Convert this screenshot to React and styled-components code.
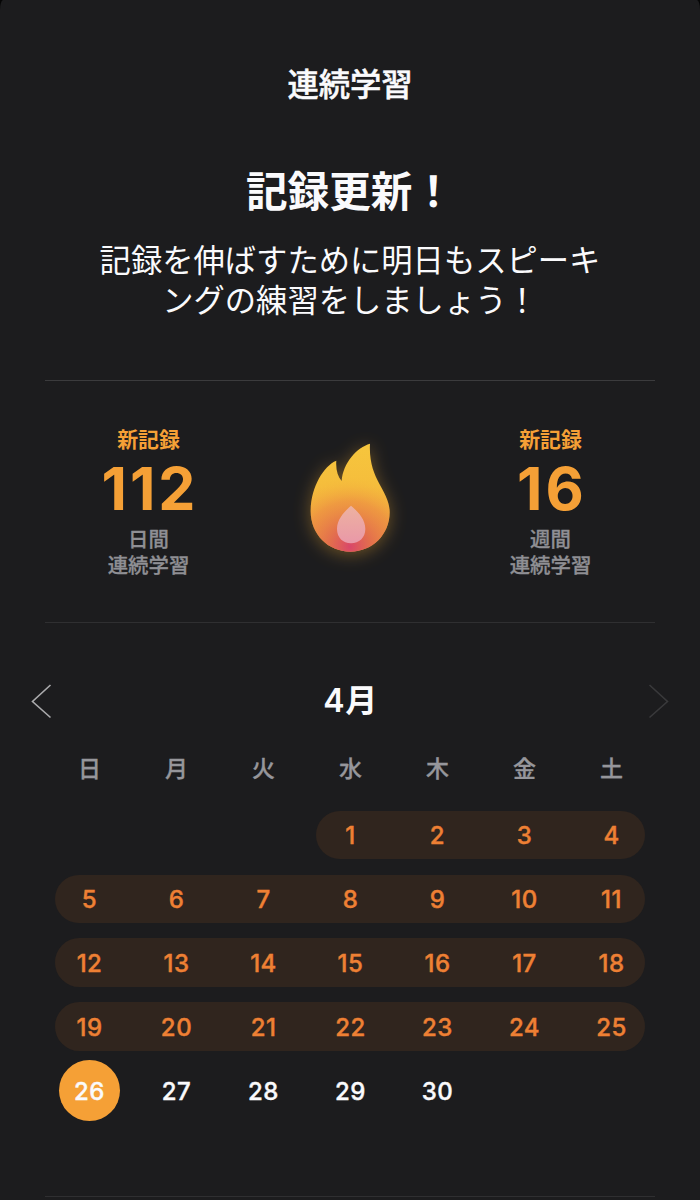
import React from "react";
import styled, { createGlobalStyle } from "styled-components";

const GlobalStyle = createGlobalStyle`
  * { box-sizing: border-box; }
  body {
    margin: 0;
    background: #050505;
    font-family: Inter, "Noto Sans CJK JP", sans-serif;
    color: #fafafc;
    overflow: hidden;
  }
`;

const Screen = styled.main`
  width: 700px;
  height: 1200px;
  overflow: hidden;
  background: #1c1c1e;
  border-radius: 3px 3px 0 0 / 10px 10px 0 0;
  display: flex;
  flex-direction: column;
`;

const ScreenTitle = styled.h1`
  margin: 63px 0 0;
  font: 500 31.3px/40px "Noto Sans CJK JP", sans-serif;
  -webkit-text-stroke: 0.5px currentColor;
  text-align: center;
`;

const Headline = styled.h2`
  margin: 56px 0 0;
  font: 700 41.6px/60px "Noto Sans CJK JP", sans-serif;
  text-align: center;
`;

const Message = styled.p`
  margin: 20px 0 0;
  height: 141px;
  font: 400 31.3px/40px "Noto Sans CJK JP", sans-serif;
  text-align: center;
  white-space: pre-line;
`;

const Divider = styled.hr`
  flex: none;
  margin: 0 45px;
  border: 0;
  height: 1px;
  background: ${(p) => (p.$faint ? "#2f2f31" : "#3b3b3d")};
`;

const Stats = styled.section`
  flex: none;
  height: 241px;
  padding: 0 47px 0 46px;
  display: grid;
  grid-template-columns: 205px 1fr 205px;
`;

const Stat = styled.div`
  display: flex;
  flex-direction: column;
  align-items: center;
  padding-top: 42px;
`;

const StatLabel = styled.div`
  font: 700 20.9px/30px "Noto Sans CJK JP", sans-serif;
  color: #f5a036;
`;

const StatValue = styled.div`
  margin: 6px 0 0 3px;
  font: 700 59px/60px Inter, sans-serif;
  letter-spacing: 3px;
  color: #f5a036;
`;

const StatUnit = styled.div`
  margin-top: 6px;
  font: 500 20.4px/26px "Noto Sans CJK JP", sans-serif;
  -webkit-text-stroke: 0.3px currentColor;
  color: #8f8f94;
  text-align: center;
  white-space: pre-line;
`;

const FlameBox = styled.div`
  display: flex;
  justify-content: center;
  padding-top: 39px;
`;

const Calendar = styled.section`
  flex: none;
  height: 573px;
  padding-top: 52px;
`;

const MonthBar = styled.header`
  height: 52px;
  padding: 0 30px 0 31px;
  display: flex;
  align-items: center;
  justify-content: space-between;
`;

const Month = styled.h3`
  margin: 0;
  font: 600 32px/52px Inter, "Noto Sans CJK JP", sans-serif;
  letter-spacing: 0.5px;
`;

const NavButton = styled.button`
  padding: 0;
  border: 0;
  background: none;
  height: 36px;
  color: ${(p) => (p.disabled ? "#39393b" : "#ababad")};
`;

const Week = styled.div`
  display: grid;
  grid-template-columns: repeat(7, 87px);
  grid-template-rows: ${(p) => p.$height}px;
  align-items: center;
  justify-items: center;
  padding-left: 46px;
`;

const Weekdays = styled(Week)`
  margin: 15px 0 11px;
  font: 500 23px/52px "Noto Sans CJK JP", sans-serif;
  -webkit-text-stroke: 0.3px currentColor;
  color: #96969b;
`;

const Streak = styled.div`
  grid-row: 1;
  grid-column: ${(p) => p.$from} / 8;
  justify-self: stretch;
  height: 48.5px;
  margin: 0 10px 0 9px;
  border-radius: 25px;
  background: #30251e;
`;

const Day = styled.div`
  grid-row: 1;
  grid-column: ${(p) => p.$column};
  width: 61px;
  height: 61px;
  padding-top: 2px;
  border-radius: 50%;
  display: flex;
  align-items: center;
  justify-content: center;
  font: 500 24px/28px Inter, sans-serif;
  letter-spacing: 0.5px;
  -webkit-text-stroke: 0.4px currentColor;
  color: ${(p) => (p.$practiced ? "#ee8034" : "#fafafc")};
  background: ${(p) => (p.$today ? "#f5a036" : "transparent")};
`;

const Flame = () => (
  <svg width="120" height="150" viewBox="0 0 360 450" overflow="visible">
    <defs>
      <linearGradient id="flame-body" x1="0" y1="0" x2="0" y2="1">
        <stop offset="0" stopColor="#f6c63d" />
        <stop offset="0.4" stopColor="#f5bd3c" />
        <stop offset="1" stopColor="#ee963f" />
      </linearGradient>
      <radialGradient id="flame-heat" gradientUnits="userSpaceOnUse" cx="180" cy="380" r="210">
        <stop offset="0" stopColor="#d9466a" />
        <stop offset="0.3" stopColor="#e06450" stopOpacity="0.8" />
        <stop offset="0.65" stopColor="#ea8245" stopOpacity="0.5" />
        <stop offset="1" stopColor="#f5b93c" stopOpacity="0" />
      </radialGradient>
      <linearGradient id="flame-core" x1="0" y1="0" x2="0" y2="1">
        <stop offset="0" stopColor="#edb2a0" />
        <stop offset="1" stopColor="#e998a8" />
      </linearGradient>
      <filter id="flame-glow" x="-50%" y="-50%" width="200%" height="200%">
        <feGaussianBlur stdDeviation="26" />
      </filter>
      <path
        id="flame-shape"
        d="M240 71C201 82 159 128 155 183C143 169 137 148 139 122C101 137 62 203 62 274C62 343 114 395 181 395C248 395 299 343 299 277C299 211 234 180 240 71Z"
      />
    </defs>
    <use href="#flame-shape" fill="#f5ad30" opacity="0.38" y="8" filter="url(#flame-glow)" />
    <use href="#flame-shape" fill="url(#flame-body)" />
    <use href="#flame-shape" fill="url(#flame-heat)" />
    <path
      d="M183 257C165 274 141 296 141 327C141 353 159 370 183 370C207 370 226 353 226 327C226 296 202 274 183 257Z"
      fill="url(#flame-core)"
    />
  </svg>
);

const Chevron = ({ next }) => (
  <svg width="22" height="36" viewBox="0 0 22 36" fill="none" stroke="currentColor" strokeWidth="1.6">
    <path d={next ? "M1.5 2L19.5 18.5L1.5 34.5" : "M19.5 2L1.5 18.5L19.5 34.5"} />
  </svg>
);

const StatBlock = ({ value, unit }) => (
  <Stat>
    <StatLabel>新記録</StatLabel>
    <StatValue>{value}</StatValue>
    <StatUnit>{unit + "\n連続学習"}</StatUnit>
  </Stat>
);

const weekdays = ["日", "月", "火", "水", "木", "金", "土"];
const FIRST_COLUMN = 4;
const DAYS = 30;
const TODAY = 26;

const weeks = Array.from({ length: 5 }, (_, week) =>
  weekdays
    .map((_, i) => ({ column: i + 1, date: week * 7 + i + 2 - FIRST_COLUMN }))
    .filter(({ date }) => date >= 1 && date <= DAYS)
);

export default function App() {
  return (
    <>
      <GlobalStyle />
      <Screen>
        <ScreenTitle>連続学習</ScreenTitle>
        <Headline>記録更新！</Headline>
        <Message>{"記録を伸ばすために明日もスピーキ\nングの練習をしましょう！"}</Message>
        <Divider />
        <Stats>
          <StatBlock value="112" unit="日間" />
          <FlameBox>
            <Flame />
          </FlameBox>
          <StatBlock value="16" unit="週間" />
        </Stats>
        <Divider $faint />
        <Calendar>
          <MonthBar>
            <NavButton aria-label="前の月">
              <Chevron />
            </NavButton>
            <Month>4月</Month>
            <NavButton aria-label="次の月" disabled>
              <Chevron next />
            </NavButton>
          </MonthBar>
          <Weekdays $height={50}>
            {weekdays.map((name) => (
              <span key={name}>{name}</span>
            ))}
          </Weekdays>
          {weeks.map((days) => (
            <Week key={days[0].date} $height={63.9}>
              {days[0].date < TODAY && <Streak $from={days[0].column} />}
              {days.map(({ column, date }) => (
                <Day key={date} $column={column} $practiced={date < TODAY} $today={date === TODAY}>
                  {date}
                </Day>
              ))}
            </Week>
          ))}
        </Calendar>
        <Divider $faint />
      </Screen>
    </>
  );
}
